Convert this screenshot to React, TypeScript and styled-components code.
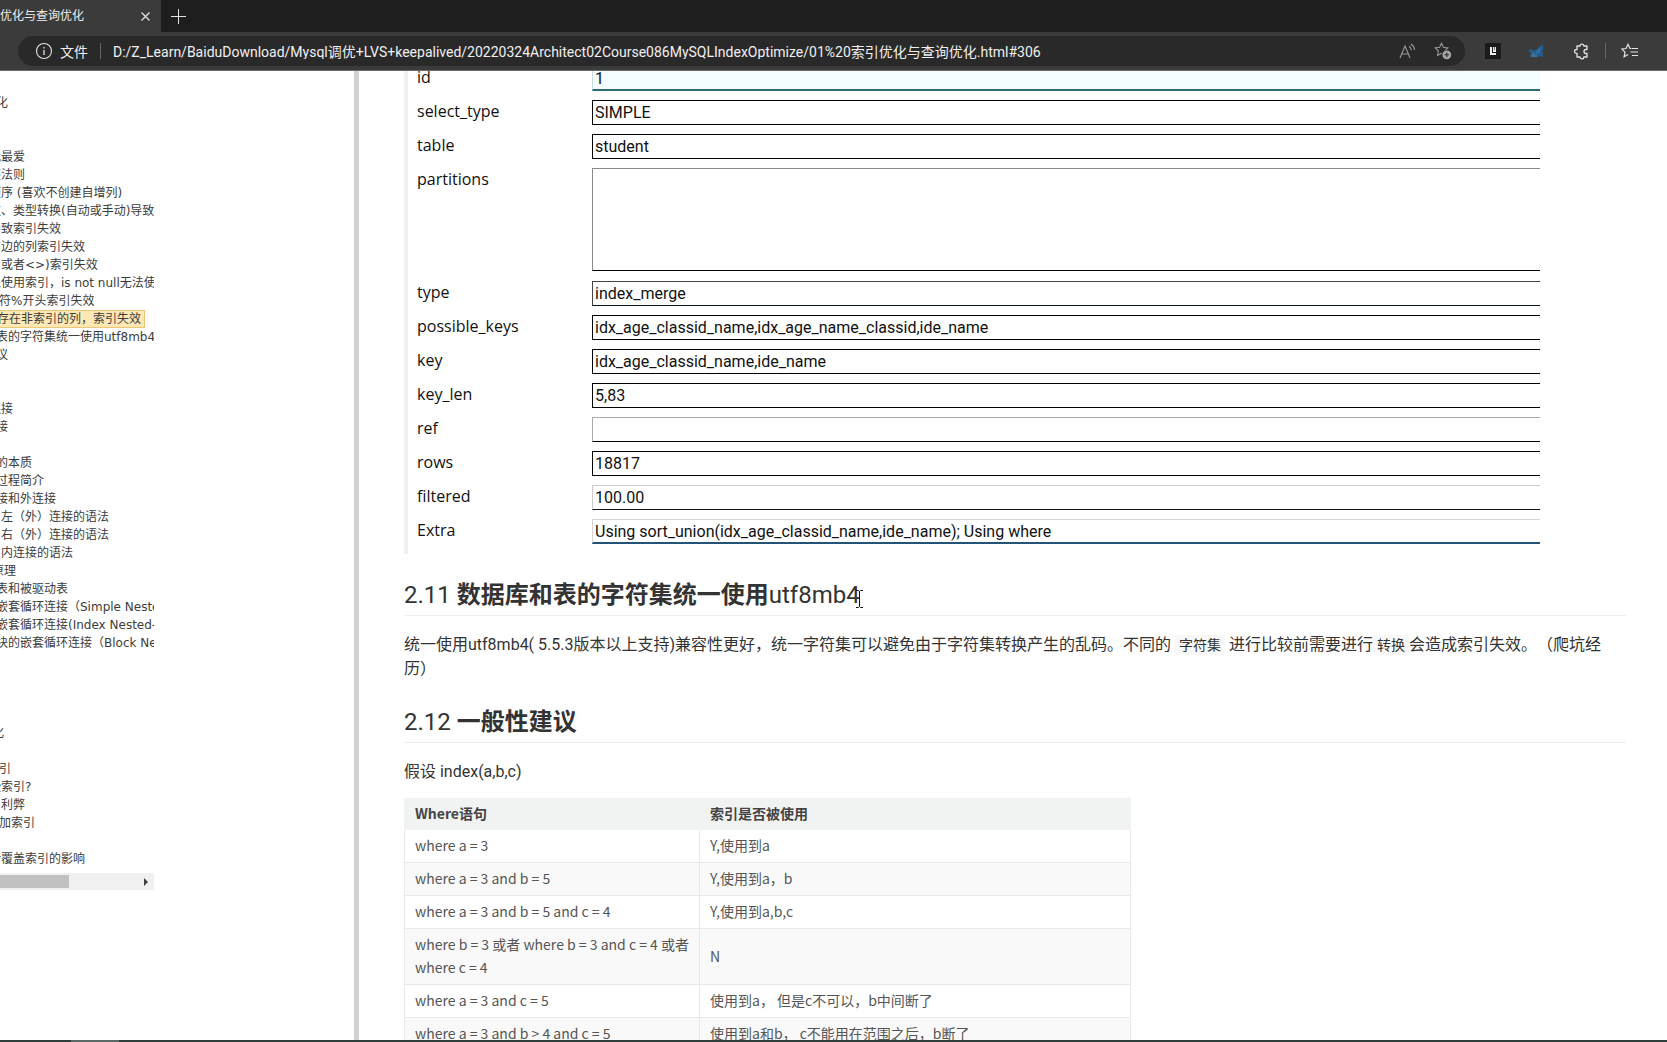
import React from "react";
import styled, { createGlobalStyle, css } from "styled-components";

const uiFont = `"Open Sans", "Noto Sans", "Noto Sans CJK SC", sans-serif`;
const textFont = `Roboto, "Noto Sans CJK SC", sans-serif`;
const tableFont = `"Noto Sans CJK SC", "Noto Sans", sans-serif`;

const GlobalStyle = createGlobalStyle`
  * { box-sizing: border-box; }
  body { margin: 0; background: #fff; font-family: ${uiFont}; overflow: hidden; text-spacing-trim: space-all; }
  button, input, textarea { font: inherit; }
`;

const Window = styled.div`
  display: flex;
  flex-direction: column;
  height: 100vh;
`;

/* Browser chrome */

const TabStrip = styled.div`
  display: flex;
  flex: none;
  height: 32px;
  background: #1e1e1e;
`;

const Tab = styled.div`
  display: flex;
  align-items: center;
  justify-content: space-between;
  width: 161px;
  padding-right: 8px;
  background: #3b3b3b;
  color: #eee;
  font-size: 12px;
  line-height: 16px;
  white-space: nowrap;
`;

const IconButton = styled.button<{ $size?: number }>`
  display: flex;
  flex: none;
  align-items: center;
  justify-content: center;
  width: ${(p) => p.$size ?? 16}px;
  height: ${(p) => p.$size ?? 16}px;
  padding: 0;
  border: 0;
  background: none;
  color: #e4e4e4;
`;

const NewTab = styled(IconButton)`
  width: 35px;
  height: 32px;
`;

const Toolbar = styled.div`
  display: flex;
  flex: none;
  align-items: center;
  gap: 20px;
  height: 39px;
  padding-left: 18px;
  border-bottom: 1px solid #6a6a6a;
  background: #3b3b3b;
  overflow: hidden;
`;

const AddressBar = styled.div`
  display: flex;
  flex: 1;
  align-items: center;
  height: 30px;
  padding: 0 12px 0 16px;
  border-radius: 15px;
  background: #292929;
  color: #f0f0f0;
  font-family: ${textFont};
  font-size: 14px;
`;

const Scheme = styled.label`
  margin-left: 6px;
  white-space: nowrap;
`;

const Separator = styled.span<{ $gap?: number }>`
  flex: none;
  width: 1px;
  height: 16px;
  margin: 0 ${(p) => p.$gap ?? 0}px;
  background: #666;
`;

const Url = styled.input`
  flex: 1;
  min-width: 0;
  padding: 0;
  border: 0;
  outline: 0;
  background: none;
  color: inherit;
`;

const AddressActions = styled.div`
  display: flex;
  gap: 16px;
  color: #999;
  ${IconButton} { color: #999; }
`;

const Extensions = styled.div`
  display: flex;
  flex: none;
  align-items: center;
  gap: 25px;
`;

const ToolbarEnd = styled.div`
  display: flex;
  flex: none;
  align-items: center;
  gap: 12px;
  margin-left: -6px;
  padding-right: 25px;
`;

/* Page */

const Page = styled.div`
  display: flex;
  flex: 1;
  min-height: 0;
  background: #fff;
`;

const Sidebar = styled.aside`
  flex: none;
  width: 359px;
  padding-top: 23px;
  border-right: 5px solid #d2d2d2;
`;

const Outline = styled.nav`
  width: 154px;
  overflow: hidden;
  color: #3c3c3c;
  font-family: "DejaVu Sans", "Noto Sans CJK SC", sans-serif;
  font-size: 12px;
  line-height: 18px;
`;

const OutlineRow = styled.div`
  height: 18px;
  white-space: pre;
`;

const OutlineLink = styled.a<{ $cut: number; $active?: boolean }>`
  display: inline-block;
  height: 18px;
  margin-left: ${(p) => 1 - p.$cut}px;
  color: inherit;
  text-decoration: none;
  ${(p) =>
    p.$active &&
    css`
      padding-right: 3px;
      border: 1px solid #f0c674;
      background: #ffe8b4;
      line-height: 16px;
    `}
`;

const ScrollTrack = styled.div`
  display: flex;
  align-items: center;
  justify-content: space-between;
  width: 154px;
  height: 17px;
  margin-top: 5px;
  padding-right: 6px;
  background: #f0f0f0;
`;

const ScrollThumb = styled.div`
  width: 69px;
  height: 13px;
  background: #c1c1c1;
`;

const Article = styled.main`
  flex: 1;
  min-width: 0;
  padding: 0 41px 0 45px;
  overflow: hidden;
  color: #333;
  font-size: 16px;
  line-height: 24px;
`;

const Explain = styled.form`
  display: flex;
  flex-direction: column;
  gap: 9px;
  margin: -5px 0 0;
  padding: 0 86px 10px 9px;
  border-left: 4px solid #f0f0f0;
  color: #111;
`;

const Field = styled.div`
  display: grid;
  grid-template-columns: 175px 1fr;
  align-items: start;
`;

const FieldLabel = styled.label`
  line-height: 22px;
`;

type Look = { $top: string; $bottom: string; $fill?: string; $thick?: boolean };

const fieldLook = css<Look>`
  display: block;
  width: 100%;
  padding: 0 2px;
  border: 1px solid ${(p) => p.$top};
  border-bottom: ${(p) => (p.$thick ? 2 : 1)}px solid ${(p) => p.$bottom};
  border-right: 0;
  border-radius: 0;
  outline: 0;
  background: ${(p) => p.$fill ?? "#fff"};
  color: #111;
  font-family: ${textFont};
`;

const FieldInput = styled.input<Look>`
  ${fieldLook}
  height: 25px;
`;

const FieldArea = styled.textarea<Look>`
  ${fieldLook}
  height: 103px;
  margin-bottom: 1px;
  resize: none;
`;

const Heading = styled.h2`
  display: flex;
  align-items: baseline;
  margin: 0;
  padding: 23px 0 2px;
  border-bottom: 1px solid #eee;
  font-family: ${textFont};
  font-size: 24px;
  font-weight: 700;
  line-height: 36px;
`;

const HeadingLatin = styled.span`
  font-weight: 400;
  white-space: pre;
`;

const TextCursor = styled.svg`
  align-self: center;
  width: 7px;
  height: 18px;
  margin: 8px 0 0 -4px;
`;

const Paragraph = styled.p`
  margin: 0;
  padding-top: 17px;
  font-family: ${textFont};
`;

const Code = styled.code`
  padding: 2px 4px;
  background: #f8f8f8;
  font-family: ${textFont};
  font-size: 14px;
`;

const RuleTable = styled.table`
  width: 727px;
  margin-top: 14px;
  border-collapse: collapse;
  table-layout: fixed;
  color: #555;
  font-family: ${tableFont};
  font-size: 14px;
  line-height: 23px;

  th, td {
    padding: 4px 10px 5px;
    border: 1px solid #e9e9e9;
    text-align: left;
  }
  th { padding: 3px 10px 4px; border-color: #f1f2f2; background: #f1f2f2; color: #444; font-weight: 700; }
  th:first-child { width: 295px; }
  tbody tr:nth-child(even) { background: #f9f9f9; }
`;

const Taskbar = styled.div`
  flex: none;
  height: 2px;
  padding-left: 71px;
  background: #303d3d;
`;

const TaskbarItem = styled.div`
  width: 48px;
  height: 2px;
  background: #5b6868;
`;

type Entry = { text: string; cut: number; active?: boolean } | null;

const outline: Entry[] = [
  { text: "化", cut: 5 },
  null,
  null,
  { text: "我最爱", cut: 12 },
  { text: "缀法则", cut: 12 },
  { text: "顺序 (喜欢不创建自增列)", cut: 12 },
  { text: "数、类型转换(自动或手动)导致", cut: 12 },
  { text: "导致索引失效", cut: 12 },
  { text: "右边的列索引失效", cut: 12 },
  { text: "或者<>)索引失效", cut: 0 },
  { text: "以使用索引，is not null无法使", cut: 12 },
  { text: "符%开头索引失效", cut: 2 },
  { text: "存在非索引的列，索引失效", cut: 5, active: true },
  { text: "表的字符集统一使用utf8mb4", cut: 5 },
  { text: "议", cut: 5 },
  null,
  null,
  { text: "连接", cut: 12 },
  { text: "接", cut: 5 },
  null,
  { text: "的本质", cut: 5 },
  { text: "过程简介", cut: 5 },
  { text: "接和外连接", cut: 5 },
  { text: "左（外）连接的语法", cut: 0 },
  { text: "右（外）连接的语法", cut: 0 },
  { text: "内连接的语法", cut: 0 },
  { text: "原理", cut: 9 },
  { text: "表和被驱动表", cut: 5 },
  { text: "嵌套循环连接（Simple Nested", cut: 5 },
  { text: "嵌套循环连接(Index Nested-", cut: 5 },
  { text: "块的嵌套循环连接（Block Nes", cut: 5 },
  null,
  null,
  null,
  null,
  { text: "化", cut: 9 },
  null,
  { text: "引", cut: 2 },
  { text: "些索引?", cut: 12 },
  { text: "利弊", cut: 0 },
  { text: "加索引", cut: 2 },
  null,
  { text: "对覆盖索引的影响", cut: 12 },
];

type Row = { name: string; value: string; top: string; bottom: string; fill?: string; thick?: boolean; area?: boolean };

const explain: Row[] = [
  { name: "id", value: "1", top: "#c9dcdc", bottom: "#2b6c78", fill: "#f3fcff", thick: true },
  { name: "select_type", value: "SIMPLE", top: "#000", bottom: "#000" },
  { name: "table", value: "student", top: "#000", bottom: "#000" },
  { name: "partitions", value: "", top: "#8a8a8a", bottom: "#000", area: true },
  { name: "type", value: "index_merge", top: "#444", bottom: "#0a141c" },
  { name: "possible_keys", value: "idx_age_classid_name,idx_age_name_classid,ide_name", top: "#000", bottom: "#000" },
  { name: "key", value: "idx_age_classid_name,ide_name", top: "#000", bottom: "#000" },
  { name: "key_len", value: "5,83", top: "#000", bottom: "#000" },
  { name: "ref", value: "", top: "#aaa", bottom: "#000" },
  { name: "rows", value: "18817", top: "#000", bottom: "#000" },
  { name: "filtered", value: "100.00", top: "#ccc", bottom: "#0d1620" },
  { name: "Extra", value: "Using sort_union(idx_age_classid_name,ide_name); Using where", top: "#d4d4d4", bottom: "#245378", thick: true },
];

const rules: [string, string][] = [
  ["where a = 3", "Y,使用到a"],
  ["where a = 3 and b = 5", "Y,使用到a，b"],
  ["where a = 3 and b = 5 and c = 4", "Y,使用到a,b,c"],
  ["where b = 3 或者 where b = 3 and c = 4 或者 where c = 4", "N"],
  ["where a = 3 and c = 5", "使用到a， 但是c不可以，b中间断了"],
  ["where a = 3 and b > 4 and c = 5", "使用到a和b， c不能用在范围之后，b断了"],
];

const starPath = "M7.5 1.3l1.9 4 4.4.6-3.2 3.1.8 4.4-3.9-2.1-3.9 2.1.8-4.4L1.2 5.9l4.4-.6z";

export default function App() {
  return (
    <Window>
      <GlobalStyle />
      <TabStrip>
        <Tab>
          <span>优化与查询优化</span>
          <IconButton aria-label="关闭标签页">
            <svg width="9" height="9" viewBox="0 0 9 9" stroke="currentColor" strokeWidth="1.2">
              <path d="M.5.5l8 8M8.5.5l-8 8" />
            </svg>
          </IconButton>
        </Tab>
        <NewTab aria-label="新建标签页">
          <svg width="15" height="15" viewBox="0 0 15 15" stroke="currentColor">
            <path d="M7.5 0v15M0 7.5h15" />
          </svg>
        </NewTab>
      </TabStrip>
      <Toolbar>
        <AddressBar>
          <IconButton aria-label="站点信息" $size={20}>
            <svg width="18" height="18" viewBox="0 0 18 18" fill="none" stroke="currentColor" strokeWidth="1.1">
              <circle cx="9" cy="9" r="7.5" />
              <path d="M9 8v5M9 5v1.4" strokeWidth="1.3" />
            </svg>
          </IconButton>
          <Scheme htmlFor="url">文件</Scheme>
          <Separator $gap={12} />
          <Url
            id="url"
            readOnly
            value="D:/Z_Learn/BaiduDownload/Mysql调优+LVS+keepalived/20220324Architect02Course086MySQLIndexOptimize/01%20索引优化与查询优化.html#306"
          />
          <AddressActions>
            <IconButton aria-label="大声朗读" $size={20}>
              <svg width="17" height="17" viewBox="0 0 17 17" fill="none" stroke="currentColor" strokeWidth="1.1">
                <path d="M1 15L6 3l5 12M2.8 11h6.4M10 3.200a5 5 0 0 1 2.300 4M12 1a8 8 0 0 1 3.600 6" />
              </svg>
            </IconButton>
            <IconButton aria-label="添加到收藏夹" $size={20}>
              <svg width="18" height="18" viewBox="0 0 18 18" fill="none" stroke="currentColor" strokeWidth="1.1">
                <path d={starPath} />
                <circle cx="12.8" cy="12.8" r="5" fill="#292929" stroke="none" />
                <circle cx="12.8" cy="12.8" r="4.4" fill="#aaa" stroke="none" />
                <path d="M12.8 10.4v4.8M10.4 12.8h4.8" stroke="#292929" />
              </svg>
            </IconButton>
          </AddressActions>
        </AddressBar>
        <Extensions>
          <IconButton aria-label="扩展 L">
            <svg width="16" height="16" viewBox="0 0 16 16">
              <rect width="16" height="16" fill="#1b1b1b" />
              <path d="M5 4h2v6h4v2H5zM8 4h3v5H8z" fill="#eee" />
              <path d="M9.500 4v3" stroke="#1b1b1b" strokeWidth=".6" />
            </svg>
          </IconButton>
          <IconButton aria-label="扩展" $size={20}>
            <svg width="18" height="16" viewBox="0 0 18 16">
              <path d="M2 6l6 1.500L16 1v6l-.6 2 1 5-4-1-2 1.500-4-.5-4-1 2.500-3L2 9z" fill="#235e8f" />
              <path d="M8 11l2-3 4-4-2 6z" fill="#3474a5" />
              <path d="M4 13h6M5 10l3 2" stroke="#60849c" />
            </svg>
          </IconButton>
          <IconButton aria-label="扩展程序" $size={20}>
            <svg width="17" height="17" viewBox="0 0 17 17" fill="none" stroke="currentColor" strokeWidth="1.3">
              <path
                d="M4 3h3a1.900 1.900 0 0 1 3.800 0H14v3.500h-1a2 2 0 0 0 0 4h1V14h-3.200a1.900 1.900 0 0 1-3.800 0H4v-3.500H3.500a2 2 0 0 1 0-4H4z"
                strokeLinejoin="round"
              />
            </svg>
          </IconButton>
        </Extensions>
        <ToolbarEnd>
          <Separator />
          <IconButton aria-label="收藏夹" $size={24}>
            <svg width="18" height="16" viewBox="0 0 18 16" fill="none" stroke="currentColor" strokeWidth="1.2">
              <path d="M10 5.500H9L7 1.300 5 5.500l-4.200.5L4 9.200l-.9 4.600L7 11.600M10.500 5.500H17M9.500 9H17M11 12.500h6" />
            </svg>
          </IconButton>
        </ToolbarEnd>
      </Toolbar>
      <Page>
        <Sidebar>
          <Outline aria-label="目录">
            {outline.map((e, i) => (
              <OutlineRow key={i}>
                {e && (
                  <OutlineLink href={`#${i}`} $cut={e.cut} $active={e.active}>
                    {e.text}
                  </OutlineLink>
                )}
              </OutlineRow>
            ))}
          </Outline>
          <ScrollTrack>
            <ScrollThumb />
            <svg width="4" height="8" viewBox="0 0 4 8">
              <path d="M0 0l4 4-4 4z" fill="#404040" />
            </svg>
          </ScrollTrack>
        </Sidebar>
        <Article>
          <Explain>
            {explain.map((r) => {
              const look = { $top: r.top, $bottom: r.bottom, $fill: r.fill, $thick: r.thick };
              return (
                <Field key={r.name}>
                  <FieldLabel htmlFor={r.name}>{r.name}</FieldLabel>
                  {r.area ? (
                    <FieldArea id={r.name} readOnly value={r.value} {...look} />
                  ) : (
                    <FieldInput id={r.name} readOnly value={r.value} {...look} />
                  )}
                </Field>
              );
            })}
          </Explain>
          <Heading>
            <HeadingLatin>2.11 </HeadingLatin>
            数据库和表的字符集统一使用
            <HeadingLatin>utf8mb4</HeadingLatin>
            <TextCursor viewBox="0 0 7 18" fill="none" stroke="#111">
              <path d="M0 .5h2.500l1 1 1-1H7M3.500 1v16M0 17.500h2.500l1-1 1 1H7" />
            </TextCursor>
          </Heading>
          <Paragraph>
            统一使用utf8mb4( 5.5.3版本以上支持)兼容性更好，统一字符集可以避免由于字符集转换产生的乱码。不同的 <Code>字符集</Code>{" "}
            进行比较前需要进行<Code>转换</Code>会造成索引失效。（爬坑经历）
          </Paragraph>
          <Heading>
            <HeadingLatin>2.12 </HeadingLatin>
            一般性建议
          </Heading>
          <Paragraph>假设 index(a,b,c)</Paragraph>
          <RuleTable>
            <thead>
              <tr>
                <th>Where语句</th>
                <th>索引是否被使用</th>
              </tr>
            </thead>
            <tbody>
              {rules.map(([clause, used]) => (
                <tr key={clause}>
                  <td>{clause}</td>
                  <td>{used}</td>
                </tr>
              ))}
            </tbody>
          </RuleTable>
        </Article>
      </Page>
      <Taskbar>
        <TaskbarItem />
      </Taskbar>
    </Window>
  );
}
